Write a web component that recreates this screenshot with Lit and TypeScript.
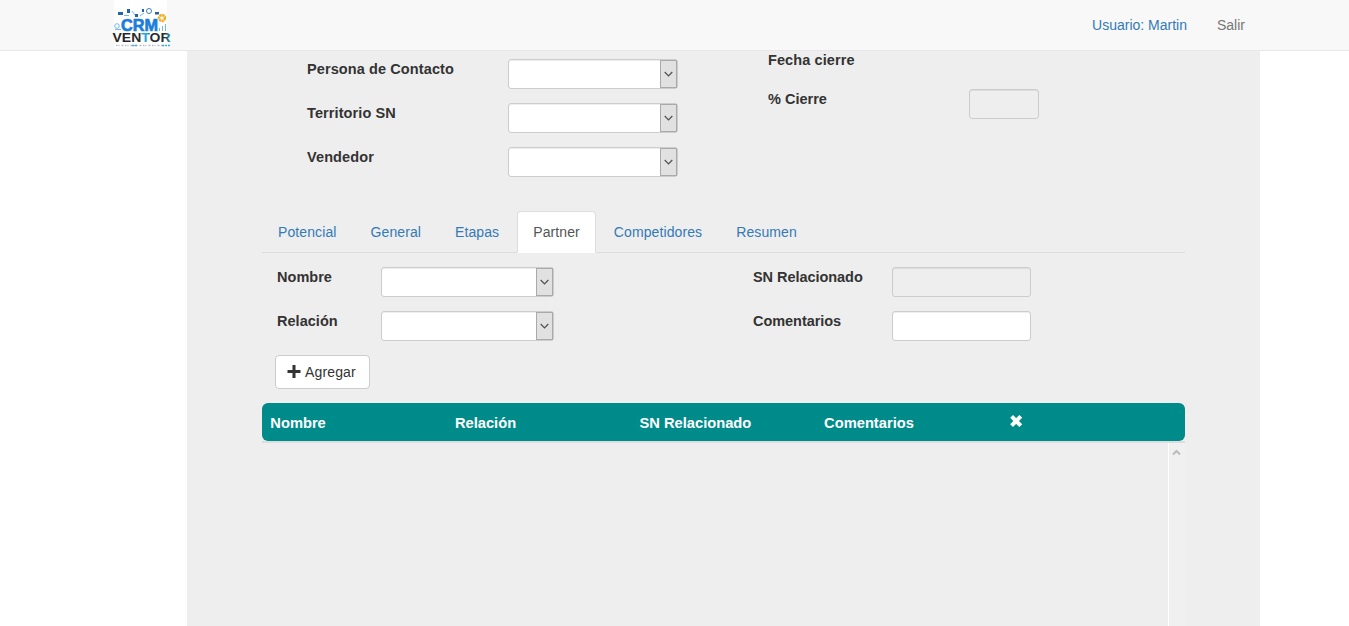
import { LitElement, html, css } from "lit";
import { customElement, property } from "lit/decorators.js";

@customElement("crm-logo")
class CrmLogo extends LitElement {
  static styles = css`
    :host { display: block; width: 60px; height: 50px; }
    svg { display: block; }
    .crm { font: bold 17px "Liberation Sans", Arial, sans-serif; fill: #1b7ddb; stroke: #1b7ddb; stroke-width: .7px; }
    .ventor { font: bold 13px "Liberation Sans", Arial, sans-serif; }
  `;
  render() {
    return html`<svg width="60" height="50" viewBox="0 0 60 50">
      <defs>
        <linearGradient id="v" x1="0" x2="1" y1="0" y2="0">
          <stop offset="0" stop-color="#222"/><stop offset=".47" stop-color="#252a30"/>
          <stop offset=".5" stop-color="#2aa6dc"/><stop offset=".6" stop-color="#2aa6dc"/>
          <stop offset=".66" stop-color="#252a30"/><stop offset=".88" stop-color="#252a30"/>
          <stop offset="1" stop-color="#2aa6dc"/>
        </linearGradient>
      </defs>
      <rect x="2" width="53" height="48" fill="#fff"/>
      <g fill="#2461b0">
        <rect x="6" y="12" width="5" height="3"/><rect x="15" y="9" width="3" height="4"/>
        <rect x="23" y="14" width="3" height="3"/><rect x="43" y="12" width="4" height="2.5"/>
        <rect x="30" y="9" width="2" height="3"/>
      </g>
      <g fill="none" stroke="#6fbbe8">
        <circle cx="37" cy="11" r="2.5" stroke="#3c80c0"/><circle cx="5" cy="26" r="2.3"/>
        <path d="M12 15.500h5M20 11l3 4M28 16l4-3M3 29.500h6M47.500 31v-3M50.500 31v-5M53.500 31v-7"/>
      </g>
      <circle cx="50" cy="18" r="2.900" fill="none" stroke="#f6ab21" stroke-width="2.600" stroke-dasharray="2.200 .500"/>
      <text class="crm" x="9" y="31" textLength="37" lengthAdjust="spacingAndGlyphs">CRM</text>
      <text class="ventor" x="0.500" y="42" textLength="58" lengthAdjust="spacingAndGlyphs" fill="url(#v)">VENTOR</text>
      <path d="M4 45.500h50" stroke="#b3bcc4" stroke-width="1.500" stroke-dasharray="1.500 1 1 2 2 1.500"/>
      <path d="M20 45.500h6M50 45.500h8" stroke="#3eaee0" stroke-width="1.500" stroke-dasharray="2 1"/>
    </svg>`;
  }
}

@customElement("form-field")
class FormField extends LitElement {
  @property() label = "";
  @property() kind: "select" | "text" | "readonly" | "none" = "text";
  static styles = css`
    :host { display: flex; align-items: flex-start; height: 44px; }
    .label { width: var(--label-width); flex: none; font-weight: bold; font-size: 14.5px; line-height: 20px; letter-spacing: var(--label-spacing, .1px); white-space: nowrap; }
    .control {
      box-sizing: border-box; height: 30px; width: var(--control-width); flex: none;
      display: flex; justify-content: flex-end; border: 1px solid #ccc; border-radius: 3px;
      background: #fff; box-shadow: inset 0 1px 1px rgba(0,0,0,.075);
    }
    .readonly { background: #eee; }
    .arrow {
      box-sizing: border-box; width: 17px; border: 1px solid #aaa; background: #e1e1e1;
      display: flex; align-items: center; padding-left: 3px;
    }
  `;
  render() {
    return html`<div class="label">${this.label}</div>
      ${this.kind === "none" ? "" : html`<div class="control ${this.kind}">
        ${this.kind === "select" ? html`<div class="arrow"><svg width="9" height="6" viewBox="0 0 9 6"><path d="M.7 1 4.5 4.8 8.3 1" fill="none" stroke="#505050" stroke-width="1.2"/></svg></div>` : ""}
      </div>`}`;
  }
}

@customElement("app-root")
class AppRoot extends LitElement {
  static styles = css`
    :host {
      display: flex; flex-direction: column; height: 626px; overflow: hidden; background: #fff;
      font: 14px/20px "Liberation Sans", Arial, sans-serif; color: #333;
    }
    .navbar {
      box-sizing: border-box; height: 51px; flex: none; background: #f8f8f8; border-bottom: 1px solid #e7e7e7;
      display: flex; justify-content: space-between; padding: 0 104px 0 112px;
    }
    .links { display: flex; gap: 30px; padding: 15px 0; }
    .user { color: #337ab7; }
    .exit { color: #777; }
    .panel { flex: 1; box-sizing: border-box; margin: 0 89px 0 187px; padding: 0 75px; background: #eee; display: flex; flex-direction: column; }
    .top { display: flex; height: 160px; flex: none; }
    .left { box-sizing: border-box; width: 506px; padding: 8px 0 0 45px; --label-width: 201px; --control-width: 170px; }
    .right { --label-width: 201px; --control-width: 70px; }
    .right form-field { --label-spacing: 0px; }
    .right form-field:first-child { height: 39px; --label-spacing: .1px; }
    .right { margin-top: -1px; }
    .tabs { display: flex; gap: 2px; height: 42px; flex: none; box-sizing: border-box; border-bottom: 1px solid #ddd; letter-spacing: .1px; }
    .tab { box-sizing: border-box; height: 42px; padding: 10px 15px; border: 1px solid transparent; border-radius: 4px 4px 0 0; color: #337ab7; }
    .active { color: #555; background: #fff; border-color: #ddd #ddd #fff; }
    .fields { display: flex; padding: 14px 0 0 15px; height: 102px; box-sizing: border-box; flex: none; }
    .col-a { width: 476px; --label-width: 104px; --control-width: 173px; --label-spacing: .03px; }
    .col-b { --label-width: 139px; --control-width: 139px; --label-spacing: -.05px; }
    .add {
      box-sizing: border-box; align-self: flex-start; margin-left: 13px; width: 95px; height: 34px; flex: none;
      border: 1px solid #ccc; border-radius: 4px; background: #fff; padding: 6px 11px; display: flex; gap: 4px; align-items: center;
      letter-spacing: .15px;
    }
    .head {
      display: grid; grid-template-columns: repeat(5, 1fr); height: 38px; flex: none; margin-top: 14px; box-sizing: border-box;
      padding: 10px 0 8px; background: #008b8b; border-radius: 6px; color: #fff; font-weight: bold; font-size: 14.7px;
    }
    .head > div { padding-left: 8.3px; }
    .head svg { margin-top: 1px; }
    .body { flex: 1; border-top: 2px solid #ddd; display: flex; justify-content: flex-end; }
    .scroll { width: 16px; border-left: 1px solid #fff; background: #f0f0f0; display: flex; padding: 6px 0 0 3px; box-sizing: content-box; width: 13px; }
    svg { display: block; }
  `;
  render() {
    const tabs = ["Potencial", "General", "Etapas", "Partner", "Competidores", "Resumen"];
    return html`
      <nav class="navbar">
        <crm-logo></crm-logo>
        <div class="links"><span class="user">Usuario: Martin</span><span class="exit">Salir</span></div>
      </nav>
      <main class="panel">
        <section class="top">
          <div class="left">
            <form-field label="Persona de Contacto" kind="select"></form-field>
            <form-field label="Territorio SN" kind="select"></form-field>
            <form-field label="Vendedor" kind="select"></form-field>
          </div>
          <div class="right">
            <form-field label="Fecha cierre" kind="none"></form-field>
            <form-field label="% Cierre" kind="readonly"></form-field>
          </div>
        </section>
        <div class="tabs">${tabs.map((t) => html`<div class="tab ${t === "Partner" ? "active" : ""}">${t}</div>`)}</div>
        <section class="fields">
          <div class="col-a">
            <form-field label="Nombre" kind="select"></form-field>
            <form-field label="Relación" kind="select"></form-field>
          </div>
          <div class="col-b">
            <form-field label="SN Relacionado" kind="readonly"></form-field>
            <form-field label="Comentarios" kind="text"></form-field>
          </div>
        </section>
        <div class="add">
          <svg width="14" height="14" viewBox="0 0 14 14"><path d="M5.500 0h3v5h5v3h-5v5h-3V8h-5V5h5z" fill="#333"/></svg>
          <span>Agregar</span>
        </div>
        <div class="head">
          <div>Nombre</div><div>Relación</div><div>SN Relacionado</div><div>Comentarios</div>
          <div><svg width="14" height="15" viewBox="0 0 14 15"><path d="M2.600 3l9.200 9.200M11.800 3l-9.200 9.200" transform="translate(0 -.6)" stroke="#fff" stroke-width="4"/></svg></div>
        </div>
        <div class="body"><div class="scroll">
          <svg width="9" height="7" viewBox="0 0 9 7"><path d="M1 5.500 4.500 2 8 5.500" fill="none" stroke="#bbb" stroke-width="2"/></svg>
        </div></div>
      </main>`;
  }
}
